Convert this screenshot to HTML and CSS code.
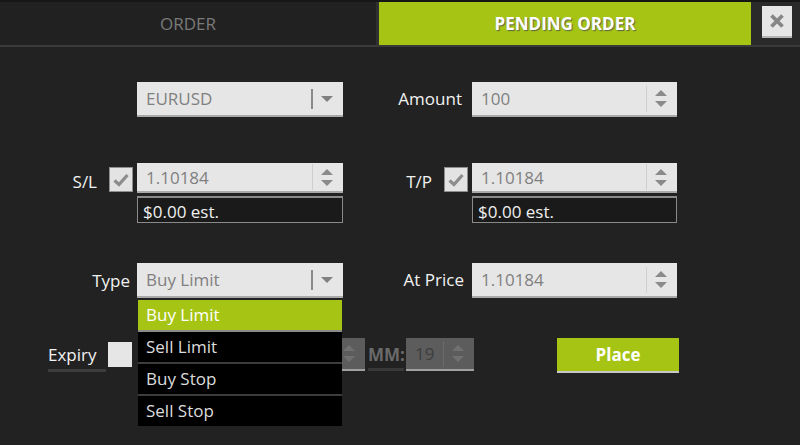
FILE: index.html
```html
<!DOCTYPE html>
<html lang="en">
<head>
    <meta charset="UTF-8">
    <title>Pending Order</title>
    <link rel="stylesheet" href="styles.css">
</head>
<body>

    <div class="tabs">
        <div class="tab">ORDER</div>
        <div class="tab-sep"></div>
        <div class="tab active">PENDING ORDER</div>
        <div class="close-area">
            <div class="close-btn">
                <svg width="16" height="16" viewBox="0 0 16 16">
                    <path d="M2.5 2.5 L13.5 13.5 M13.5 2.5 L2.5 13.5" stroke="#868686" stroke-width="3.8" stroke-linecap="butt"/>
                </svg>
            </div>
        </div>
    </div>

    <div class="form">
        <!-- symbol / amount -->
        <div class="row row-1">
            <div class="field left">
                <div class="box select tall">
                    <span class="val">EURUSD</span>
                    <span class="caret"><span class="tri-down"></span></span>
                </div>
            </div>
            <div class="field right">
                <label class="lbl lbl-amount">Amount</label>
                <div class="box spin tall">
                    <span class="val">100</span>
                    <span class="spinner"><span class="tri-up"></span><span class="tri-down sm"></span></span>
                </div>
            </div>
        </div>

        <!-- stop loss / take profit -->
        <div class="row row-2">
            <div class="field left">
                <label class="lbl lbl-sl">S/L</label>
                <div class="check on">
                    <svg width="16" height="14" viewBox="0 0 16 14"><path d="M1.5 7.5 L6 11.5 L14.5 2" fill="none" stroke="#8c8c8c" stroke-width="3.2"/></svg>
                </div>
                <div class="stack">
                    <div class="box spin short">
                        <span class="val">1.10184</span>
                        <span class="spinner"><span class="tri-up"></span><span class="tri-down sm"></span></span>
                    </div>
                    <div class="est">$0.00 est.</div>
                </div>
            </div>
            <div class="field right">
                <label class="lbl lbl-tp">T/P</label>
                <div class="check on">
                    <svg width="16" height="14" viewBox="0 0 16 14"><path d="M1.5 7.5 L6 11.5 L14.5 2" fill="none" stroke="#8c8c8c" stroke-width="3.2"/></svg>
                </div>
                <div class="stack">
                    <div class="box spin short">
                        <span class="val">1.10184</span>
                        <span class="spinner"><span class="tri-up"></span><span class="tri-down sm"></span></span>
                    </div>
                    <div class="est">$0.00 est.</div>
                </div>
            </div>
        </div>

        <!-- type / price -->
        <div class="row row-3">
            <div class="field left">
                <label class="lbl lbl-type">Type</label>
                <div class="select-wrap">
                    <div class="box select tall">
                        <span class="val">Buy Limit</span>
                        <span class="caret"><span class="tri-down"></span></span>
                    </div>
                    <ul class="menu">
                        <li class="sel">Buy Limit</li>
                        <li>Sell Limit</li>
                        <li>Buy Stop</li>
                        <li>Sell Stop</li>
                    </ul>
                </div>
            </div>
            <div class="field right">
                <label class="lbl lbl-price">At Price</label>
                <div class="box spin tall">
                    <span class="val">1.10184</span>
                    <span class="spinner"><span class="tri-up"></span><span class="tri-down sm"></span></span>
                </div>
            </div>
        </div>

        <!-- expiry -->
        <div class="row row-4">
            <label class="lbl expiry">Expiry</label>
            <div class="check blank"></div>
            <div class="box off hh">
                <span class="val"></span>
                <span class="spinner"><span class="tri-up"></span><span class="tri-down sm"></span></span>
            </div>
            <span class="mm">MM:</span>
            <div class="box off mm-box">
                <span class="val">19</span>
                <span class="spinner"><span class="tri-up"></span><span class="tri-down sm"></span></span>
            </div>
            <button class="place">Place</button>
        </div>
    </div>

</body>
</html>
```

FILE: styles.css
```css
body {
    margin: 0;
    width: 800px;
    height: 445px;
    overflow: hidden;
    background-color: #222222;
    font-family: "Open Sans", "DejaVu Sans", sans-serif;
    font-size: 17px;
    color: #f0f0f0;
}

/* top tabs */
.tabs {
    display: flex;
    height: 43px;
    border-top: 2px solid #161616;
    border-bottom: 2px solid #3a3a3a;
    background-color: #212121;
}

.tab {
    width: 376px;
    display: flex;
    align-items: center;
    justify-content: center;
    color: #7a7a7a;
}

.tab-sep {
    width: 3px;
    background-color: #303030;
}

.tab.active {
    width: 372px;
    background-color: #a6c413;
    color: #ffffff;
    font-weight: bold;
    text-shadow: 1px 1px 1px rgba(60, 60, 90, 0.7);
}

.close-area {
    flex: 1;
    background-color: #2a2a2a;
    padding: 4px 0 0 11px;
}

.close-btn {
    width: 30px;
    height: 30px;
    background-color: #e6e6e6;
    border-bottom: 2px solid #b5b5b5;
    display: flex;
    align-items: center;
    justify-content: center;
}

/* form */
.form {
    display: flex;
    flex-direction: column;
}

.row {
    display: flex;
}

.row-1 { margin-top: 35px; }
.row-2 { margin-top: 46px; }
.row-3 { margin-top: 40px; }
.row-4 { margin-top: 40px; }

.field {
    display: flex;
    justify-content: flex-end;
    align-items: flex-start;
}

.field.left { width: 343px; }
.field.right { width: 334px; }

.lbl {
    height: 35px;
    line-height: 34px;
    color: #f2f2f2;
}

.lbl-amount { margin-right: 10px; }
.lbl-price { margin-right: 8px; }
.lbl-type { margin-right: 7px; line-height: 36px; }
.lbl-sl { line-height: 38px; margin-right: 12px; }
.lbl-tp { line-height: 38px; margin-right: 12px; }

.box {
    position: relative;
    width: 206px;
    height: 33px;
    box-sizing: border-box;
    background-color: #e6e6e6;
    border-bottom: 2px solid #a9a9a9;
    display: flex;
    align-items: center;
    color: #808080;
}

.box.tall { height: 35px; }
.box.short { height: 30px; }
.field.right .box { width: 205px; }

.val {
    flex: 1;
    padding-left: 9px;
}

.caret {
    width: 28px;
    height: 20px;
    border-left: 2px solid #8a8a8a;
    display: flex;
    align-items: center;
    justify-content: center;
    margin-right: 2px;
}

.spinner {
    width: 28px;
    height: 26px;
    border-left: 1px solid #cfcfcf;
    display: flex;
    flex-direction: column;
    align-items: center;
    justify-content: center;
    gap: 5px;
    margin-right: 2px;
}

.tri-down {
    width: 0;
    height: 0;
    border-left: 6px solid transparent;
    border-right: 6px solid transparent;
    border-top: 6px solid #808080;
}

.tri-up {
    width: 0;
    height: 0;
    border-left: 6px solid transparent;
    border-right: 6px solid transparent;
    border-bottom: 6px solid #8a8a8a;
}

.tri-down.sm {
    border-top-color: #8a8a8a;
}

.check {
    width: 24px;
    height: 25px;
    box-sizing: border-box;
    margin-top: 4px;
    margin-right: 4px;
    background-color: #e3e3e3;
    border: 1px solid #8e8e8e;
    display: flex;
    align-items: center;
    justify-content: center;
}

.stack {
    display: flex;
    flex-direction: column;
    gap: 3px;
}

.est {
    width: 206px;
    height: 27px;
    box-sizing: border-box;
    background-color: #1a1a1a;
    border: 1px solid #8a8a8a;
    border-top-width: 2px;
    color: #f0f0f0;
    padding-left: 5px;
    line-height: 27px;
}

.field.right .est { width: 205px; }

/* type dropdown */
.select-wrap {
    position: relative;
}

.menu {
    position: absolute;
    left: 1px;
    top: 37px;
    width: 204px;
    margin: 0;
    padding: 0;
    list-style: none;
    background-color: #000000;
    z-index: 2;
}

.menu li {
    height: 30px;
    line-height: 29px;
    padding-left: 8px;
    color: #dcdcdc;
    border-bottom: 2px solid #3c3c3c;
}

.menu li:last-child {
    border-bottom: none;
}

.menu li.sel {
    background-color: #a6c413;
    color: #ffffff;
    border-bottom-color: #8a8a8a;
}

/* expiry row */
.row-4 {
    align-items: flex-start;
    padding-left: 48px;
}

.expiry {
    width: 58px;
    height: 30px;
    line-height: 32px;
    border-bottom: 3px solid #3c3c3c;
    margin-top: 1px;
}

.check.blank {
    background-color: #e6e6e6;
    border: none;
    margin-top: 4px;
    margin-left: 2px;
    margin-right: 6px;
}

.box.off {
    height: 33px;
    background-color: #5c5c5c;
    border-bottom-color: #a0a0a0;
    color: #3e3e3e;
}

.box.off .spinner {
    border-left-color: #6a6a6a;
}

.box.off .tri-up { border-bottom-color: #707070; }
.box.off .tri-down { border-top-color: #707070; }

.box.hh { width: 227px; }

.mm {
    width: 36px;
    margin-left: 3px;
    height: 30px;
    line-height: 34px;
    color: #6a6a6a;
    font-weight: bold;
    border-bottom: 3px solid #383838;
}

.box.mm-box {
    width: 68px;
    margin-left: 2px;
}

.place {
    margin-left: 83px;
    width: 122px;
    height: 35px;
    border: none;
    border-bottom: 2px solid #c8c8c8;
    background-color: #a6c413;
    color: #ffffff;
    font-family: "Open Sans", "DejaVu Sans", sans-serif;
    font-size: 17px;
    font-weight: bold;
    padding: 0;
}
```
